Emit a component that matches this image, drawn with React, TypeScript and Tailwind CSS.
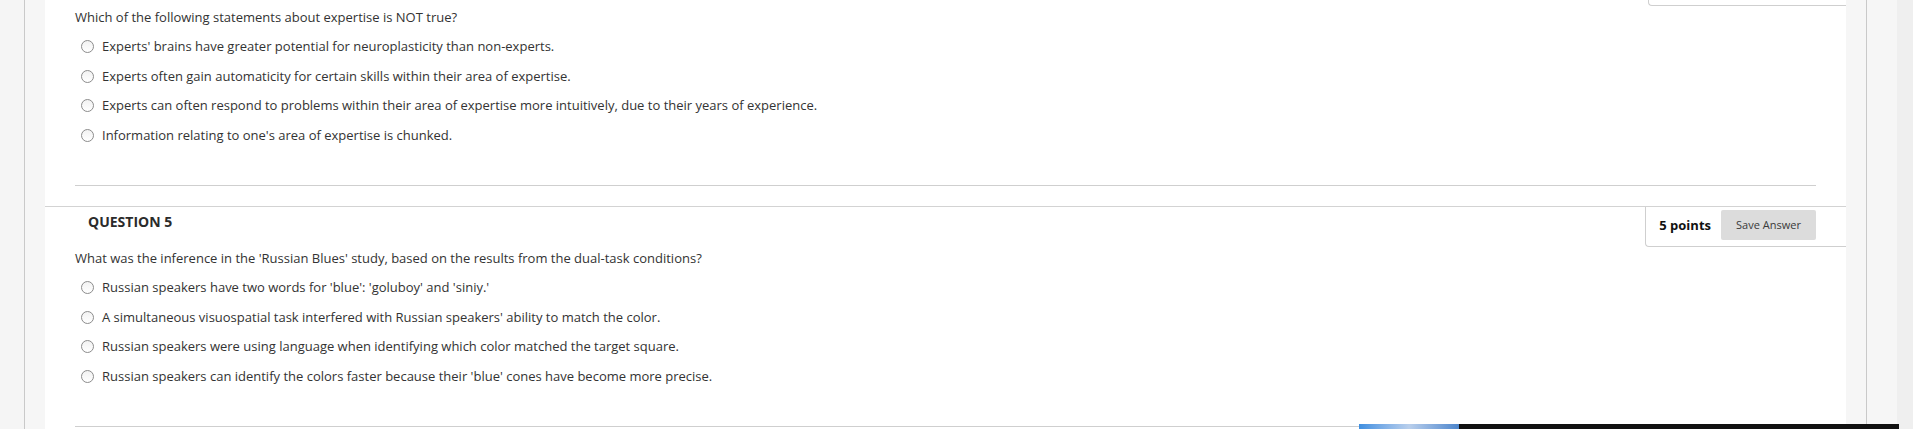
import React from "react";

type Question = {
  number: number;
  points: number;
  prompt: string;
  options: string[];
};

const questions: Question[] = [
  {
    number: 4,
    points: 5,
    prompt: "Which of the following statements about expertise is NOT true?",
    options: [
      "Experts' brains have greater potential for neuroplasticity than non-experts.",
      "Experts often gain automaticity for certain skills within their area of expertise.",
      "Experts can often respond to problems within their area of expertise more intuitively, due to their years of experience.",
      "Information relating to one's area of expertise is chunked.",
    ],
  },
  {
    number: 5,
    points: 5,
    prompt: "What was the inference in the 'Russian Blues' study, based on the results from the dual-task conditions?",
    options: [
      "Russian speakers have two words for 'blue': 'goluboy' and 'siniy.'",
      "A simultaneous visuospatial task interfered with Russian speakers' ability to match the color.",
      "Russian speakers were using language when identifying which color matched the target square.",
      "Russian speakers can identify the colors faster because their 'blue' cones have become more precise.",
    ],
  },
];

// scrolledPast: the header has scrolled off the top, only the bottom of the points box shows
function QuestionBlock({ q, scrolledPast }: { q: Question; scrolledPast?: boolean }) {
  return (
    <section className={scrolledPast ? "" : "border-t border-[#d3d3d3]"}>
      {scrolledPast ? (
        <div className="flex justify-end h-[6px]">
          <div className="w-[198px] h-[6px] border-l border-b border-[#cfcfcf] rounded-bl-[4px]" />
        </div>
      ) : (
        <div className="flex justify-between h-[40px]">
          <h3 className="pl-[43px] pt-[5px] text-[14px] leading-[20px] font-bold text-[#2b2b2b] uppercase">
            Question {q.number}
          </h3>
          <div className="h-[40px] flex items-start gap-[10px] pl-[13px] pr-[30px] pt-[3px] border-l border-b border-[#cfcfcf] rounded-bl-[4px] whitespace-nowrap">
            <span className="text-[13px] leading-[30px] font-bold text-[#111]">{q.points} points</span>
            <button className="h-[30px] w-[95px] shrink-0 bg-[#dcdcdc] rounded-[2px] text-[11px] text-[#3a3a3a]">
              Save Answer
            </button>
          </div>
        </div>
      )}

      <p className="mt-[2px] pl-[30px] text-[13px] leading-[18px] text-[#333]">{q.prompt}</p>

      <ul className="mt-[6px] pl-[36px]">
        {q.options.map((opt) => (
          <li key={opt} className="h-[29.5px] flex items-center gap-[8px] text-[13px] text-[#333]">
            <span className="w-[13px] h-[13px] rounded-full border border-[#8c8c8c] bg-gradient-to-b from-[#f2f2f2] to-white shrink-0" />
            <span>{opt}</span>
          </li>
        ))}
      </ul>

      <div className="mt-[35px] mb-[20px] mx-[30px] border-t border-[#cfcfcf]" />
    </section>
  );
}

export default function App() {
  return (
    <div className="relative flex h-[429px] overflow-hidden bg-white font-['Open_Sans','Liberation_Sans',sans-serif]">
      {/* left rail */}
      <div className="w-[25px] shrink-0 bg-[#f5f5f5] border-r border-[#c9c9c9]" />
      <div className="w-[20px] shrink-0 bg-[#f6f6f6]" />

      {/* Main Content */}
      <main className="w-[1801px] shrink-0 bg-white overflow-hidden">
        {questions.map((q, i) => (
          <QuestionBlock key={q.number} q={q} scrolledPast={i === 0} />
        ))}
      </main>

      {/* right rail */}
      <div className="w-[21px] shrink-0 bg-[#f6f6f6] border-r border-[#c9c9c9]" />
      <div className="w-[30px] shrink-0 bg-[#f6f6f6]" />
      <div className="w-[16px] shrink-0 bg-[#efefef]" />

      {/* thumbnail peeking in at the bottom */}
      <div className="absolute left-[1359px] top-[424px] w-[540px] h-[10px] flex">
        <div className="w-[100px] h-full bg-gradient-to-r from-[#3f8fe0] via-[#b9cfec] to-[#4d86cc]" />
        <div className="flex-1 h-full bg-[#111111]" />
      </div>
    </div>
  );
}
